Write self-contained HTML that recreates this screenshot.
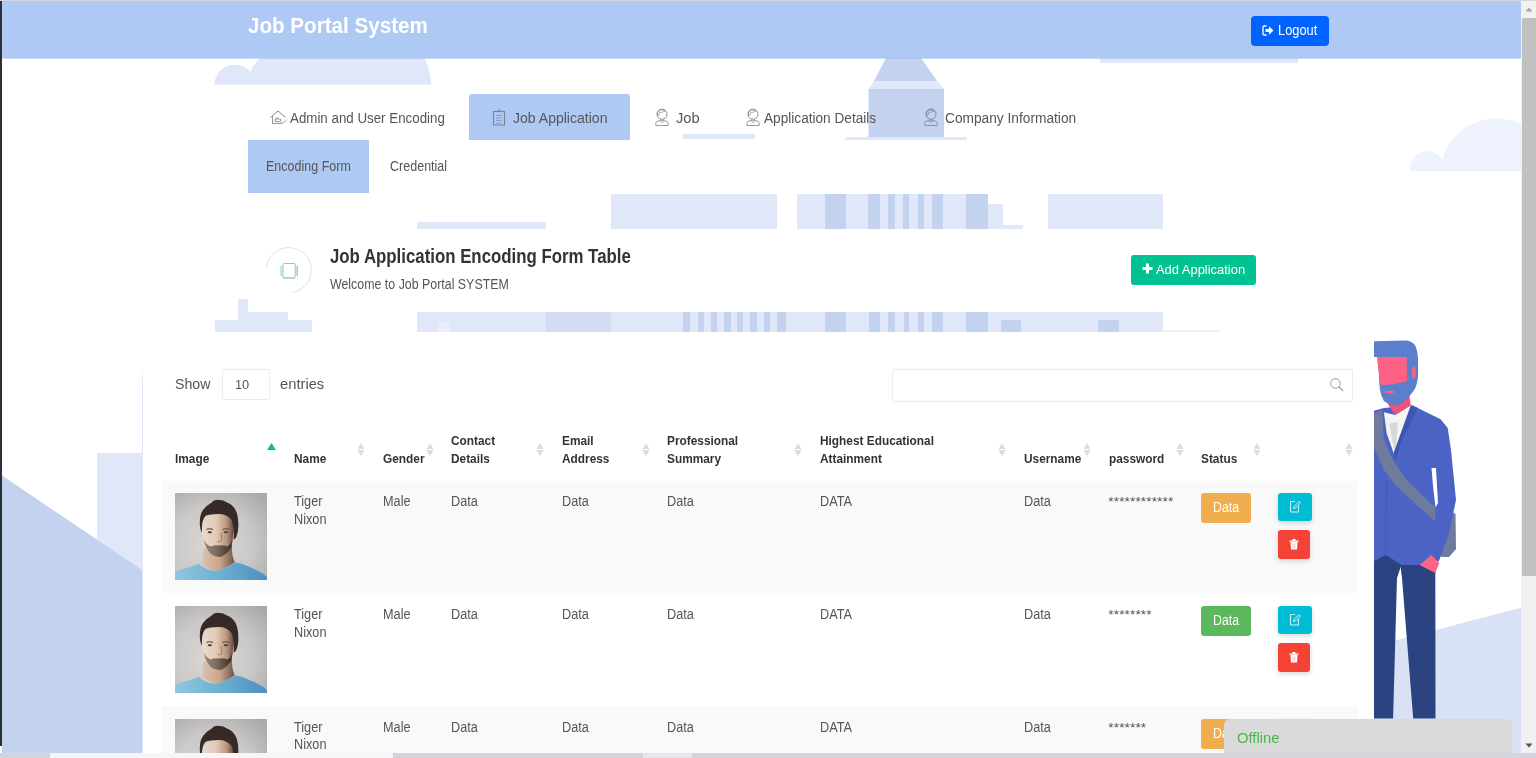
<!DOCTYPE html>
<html><head><meta charset="utf-8">
<style>
*{box-sizing:border-box;margin:0;padding:0}
html,body{width:1536px;height:758px;overflow:hidden;background:#fff}
body{position:relative;font-family:"Liberation Sans",sans-serif;color:#555}
.a{position:absolute}
.lt{background:#dfe7f8}
.dk{background:#c3d2ef}
</style></head><body>
<div class="a" style="left:0;top:0;width:1536px;height:1px;background:#d3d7de"></div>
<div class="a" style="left:0;top:1px;width:2px;height:745px;background:#2b2f36"></div>
<svg class="a" style="left:200px;top:58px" width="240" height="27" viewBox="200 58 240 27">
 <path d="M214.4 84.7 A20.3 20.3 0 0 1 250.3 72 Q254 63 261 57 L423.7 57 Q430 68 431.4 84.7 Z" fill="#dfe7f8"/>
</svg>
<svg class="a" style="left:840px;top:58px" width="130" height="84">
 <polygon points="46,0 81,0 97,23 34,23" fill="#c3d2ef"/>
 <polygon points="34,23 97,23 104,31 29,31" fill="#dfe7f8"/>
 <rect x="28.5" y="31" width="75.5" height="48" fill="#c3d2ef"/>
 <rect x="5.5" y="79" width="121" height="3" fill="#dfe7f8"/>
</svg>
<div class="a lt" style="left:683px;top:134px;width:72px;height:5px"></div>
<div class="a lt" style="left:1100px;top:58px;width:198px;height:5px"></div>
<svg class="a" style="left:1405px;top:116px" width="120" height="60">
 <path d="M5.4 55.3 A17.2 17.2 0 0 1 37 43.4 A57.5 57.5 0 0 1 116 7.8 L116 55.3 Z" fill="#edf2fc"/>
</svg>
<div class="a lt" style="left:417px;top:222px;width:129px;height:7px"></div>
<div class="a lt" style="left:611px;top:194px;width:166px;height:35px"></div>
<div class="a lt" style="left:797px;top:194px;width:191px;height:35px"></div>
<div class="a dk" style="left:825px;top:194px;width:21px;height:35px"></div>
<div class="a dk" style="left:868px;top:194px;width:12px;height:35px"></div>
<div class="a dk" style="left:888px;top:194px;width:7px;height:35px"></div>
<div class="a dk" style="left:903px;top:194px;width:6px;height:35px"></div>
<div class="a dk" style="left:918px;top:194px;width:6px;height:35px"></div>
<div class="a dk" style="left:932px;top:194px;width:11px;height:35px"></div>
<div class="a dk" style="left:966px;top:194px;width:22px;height:35px"></div>
<div class="a lt" style="left:988px;top:204px;width:15px;height:25px"></div>
<div class="a lt" style="left:1003px;top:225px;width:20px;height:4px"></div>
<div class="a lt" style="left:1048px;top:194px;width:115px;height:35px"></div>
<div class="a lt" style="left:215px;top:320px;width:97px;height:12px"></div>
<div class="a lt" style="left:238px;top:312px;width:50px;height:9px"></div>
<div class="a lt" style="left:238px;top:299px;width:10px;height:14px"></div>
<div class="a lt" style="left:417px;top:312px;width:746px;height:20px"></div>
<div class="a " style="left:438px;top:322px;width:12px;height:10px;background:#e9eef9"></div>
<div class="a " style="left:546px;top:312px;width:65px;height:20px;background:#d2ddf3"></div>
<div class="a dk" style="left:683px;top:312px;width:7px;height:20px"></div>
<div class="a dk" style="left:698px;top:312px;width:6px;height:20px"></div>
<div class="a dk" style="left:711px;top:312px;width:6px;height:20px"></div>
<div class="a dk" style="left:724px;top:312px;width:7px;height:20px"></div>
<div class="a dk" style="left:737px;top:312px;width:6px;height:20px"></div>
<div class="a dk" style="left:750px;top:312px;width:7px;height:20px"></div>
<div class="a dk" style="left:764px;top:312px;width:6px;height:20px"></div>
<div class="a dk" style="left:777px;top:312px;width:9px;height:20px"></div>
<div class="a dk" style="left:825px;top:312px;width:21px;height:20px"></div>
<div class="a dk" style="left:869px;top:312px;width:11px;height:20px"></div>
<div class="a dk" style="left:888px;top:312px;width:7px;height:20px"></div>
<div class="a dk" style="left:904px;top:312px;width:5px;height:20px"></div>
<div class="a dk" style="left:918px;top:312px;width:6px;height:20px"></div>
<div class="a dk" style="left:932px;top:312px;width:11px;height:20px"></div>
<div class="a dk" style="left:966px;top:312px;width:22px;height:20px"></div>
<div class="a dk" style="left:1001px;top:320px;width:20px;height:12px"></div>
<div class="a dk" style="left:1098px;top:320px;width:21px;height:12px"></div>
<div class="a " style="left:1163px;top:330px;width:58px;height:2px;background:#eef2fb"></div>
<div class="a lt" style="left:97px;top:453px;width:45px;height:300px"></div>
<svg class="a" style="left:2px;top:470px" width="141" height="283"><polygon points="0,5.5 141,100.8 141,283 0,283" fill="#c3d2ee"/></svg>
<!-- man illustration -->
<svg class="a" style="left:1360px;top:335px" width="162" height="420" viewBox="1360 335 162 420">
 <polygon points="1374,646 1521,607.7 1521,753 1374,753" fill="#d9e2f5"/>
 <polygon points="1374,550 1401,555 1401,566 1397,578 1393.1,718.4 1374,718.4" fill="#2b4380"/>
 <polygon points="1399,555 1435.3,555 1435.5,718.4 1413.2,718.4 1402,578" fill="#2b4380"/>
 <polygon points="1435.3,507.6 1448,509 1455.5,514 1456,549 1449,557 1441,557 1436,540" fill="#6e7b9c"/>
 <polygon points="1374,410.8 1383.9,408 1412.2,405.2 1440.6,419.3 1447.7,427.9 1451,450 1453,470 1456,500 1449,533 1439,561 1423,565 1401.6,565 1385.8,555 1374,561" fill="#4a63c5"/>
 <polygon points="1431.5,468 1436,468 1438,503 1435.5,507.5 1433,486" fill="#fff"/>
 <polygon points="1383.9,412.3 1395.2,415 1410.8,405.2 1412.2,416.5 1393.8,453.4 1386.7,433.5" fill="#f4f4f4"/>
 <polygon points="1389.5,423.6 1398,422.2 1395.5,453.4 1392,440" fill="#d8d8d8"/>
 <polygon points="1410.8,405.2 1418,408 1400.9,442 1395.2,461.9 1394,452" fill="#3b55b0"/>
 <polygon points="1374,413.7 1382.4,409.4 1383.9,439.2 1392,458 1406.6,480 1435.3,507.6 1435.3,521.5 1397,487 1384,470 1376,452 1374,448" fill="#6e7b9c"/>
 <path d="M1387 480 Q1385 520 1386 555" stroke="#4258b8" stroke-width="1" fill="none"/>
 <polygon points="1419.5,565 1431.3,555 1439.3,563 1435.3,573" fill="#ff6384"/>
 <polygon points="1386.7,402.3 1409.4,395.2 1410.8,405.2 1395.2,415" fill="#f0507a"/>
 <path d="M1374 341.3 L1406.6 340.4 Q1413 341.5 1415.5 346 Q1418.5 354 1418 363 L1418 377 Q1417 386 1413.6 391 Q1406 401 1398 405.2 Q1389 405 1383.9 400.9 Q1380.5 395 1379.6 388.1 L1374 357 Z" fill="#5b7fcc"/>
 <polygon points="1374,356.9 1378,356.9 1379.6,388.1 1374,388.1" fill="#fff"/>
 <polygon points="1376.8,356.9 1406.6,356.9 1407.1,381 1395.2,383.9 1381,385.3 1378.2,368.3" fill="#ff6185"/>
 <ellipse cx="1413.8" cy="372.5" rx="1.9" ry="6.5" fill="#ff6185"/>
 <ellipse cx="1389.5" cy="392" rx="5" ry="1.3" fill="#ff6185"/>
</svg>

<div class="a" style="left:2px;top:1px;width:1519px;height:57px;background:#afc9f5;box-shadow:0 0.5px 1px rgba(150,180,235,0.5)"></div>
<div class="a" style="left:247.7px;top:13.00px;font-size:22.5px;font-weight:bold;color:#fff;line-height:normal;white-space:nowrap;transform:scaleX(0.916);transform-origin:0 0">Job Portal System</div>
<div class="a" style="left:1251px;top:16px;width:78px;height:30px;background:#0062ff;border-radius:4px"></div>
<svg class="a" style="left:1262px;top:25px" width="12" height="11" viewBox="0 0 12 11"><path d="M4.5 1H2.2Q1 1 1 2.2V8.8Q1 10 2.2 10H4.5" fill="none" stroke="#fff" stroke-width="1.3"/><path d="M3.5 4H7V1.2L11.5 5.5 7 9.8V7H3.5Z" fill="#fff"/></svg>
<div class="a" style="left:1277.8px;top:23.00px;font-size:13.8px;font-weight:normal;color:#fff;line-height:normal;white-space:nowrap;transform:scaleX(0.931);transform-origin:0 0">Logout</div>
<div class="a" style="left:469px;top:94px;width:161px;height:46px;background:#afc9f5;border-radius:3px 3px 0 0"></div>
<svg class="a" style="left:269px;top:109px" width="19" height="17" viewBox="0 0 19 17">
 <path d="M1.5 8.5 L9 2 L16.5 8.5" fill="none" stroke="#777" stroke-width="0.9"/>
 <path d="M3.5 7 V14.5 H13" fill="none" stroke="#888" stroke-width="0.9"/>
 <path d="M6 10 H11.5 V12.5 H6 Z M7.5 8.5 V10 M9 8.5 V10" fill="none" stroke="#888" stroke-width="0.8"/>
 <path d="M8 14.5 Q15 15 18 10.5" fill="none" stroke="#999" stroke-width="0.9"/>
</svg>
<div class="a" style="left:289.7px;top:110.00px;font-size:14px;font-weight:normal;color:#555;line-height:normal;white-space:nowrap;transform:scaleX(0.952);transform-origin:0 0">Admin and User Encoding</div>
<svg class="a" style="left:492px;top:108px" width="14" height="18" viewBox="0 0 14 18">
 <rect x="1.5" y="3.5" width="11" height="13.5" fill="none" stroke="#7a8294" stroke-width="1.1"/>
 <path d="M5 3.5 L7 1.5 L9 3.5" fill="none" stroke="#7a8294" stroke-width="1"/>
 <path d="M4 7.5H10M4 10H10M4 12.5H10M4 15H9" stroke="#8a93a5" stroke-width="0.8"/>
</svg>
<div class="a" style="left:512.7px;top:110.00px;font-size:14px;font-weight:normal;color:#555;line-height:normal;white-space:nowrap;transform:scaleX(1.003);transform-origin:0 0">Job Application</div>
<svg class="a" style="left:654px;top:107px" width="16" height="20" viewBox="0 0 16 20">
 <ellipse cx="8" cy="7.2" rx="5" ry="5.1" fill="none" stroke="#6d7280" stroke-width="0.8"/>
 <path d="M3.3 8 Q3 4 6 3 Q9 2.3 11 4 Q9 5.5 6 5.3 Q5 7 4.5 9" fill="none" stroke="#7a8090" stroke-width="0.7"/>
 <path d="M6.5 12.2 V13.8 M9.5 12.2 V13.8" stroke="#8a8f9a" stroke-width="0.7"/>
 <path d="M1.8 18.5 V16 Q2 14 5 13.8 H11 Q14 14 14.2 16 V18.5 Z" fill="none" stroke="#7d828e" stroke-width="0.8"/>
 <path d="M6.5 14.5 L8 16 L9.5 14.5" fill="none" stroke="#999" stroke-width="0.6"/>
</svg>
<div class="a" style="left:675.7px;top:110.00px;font-size:14px;font-weight:normal;color:#555;line-height:normal;white-space:nowrap;transform:scaleX(1.045);transform-origin:0 0">Job</div>
<svg class="a" style="left:745px;top:107px" width="16" height="20" viewBox="0 0 16 20">
 <ellipse cx="8" cy="7.2" rx="5" ry="5.1" fill="none" stroke="#6d7280" stroke-width="0.8"/>
 <path d="M3.3 8 Q3 4 6 3 Q9 2.3 11 4 Q9 5.5 6 5.3 Q5 7 4.5 9" fill="none" stroke="#7a8090" stroke-width="0.7"/>
 <path d="M6.5 12.2 V13.8 M9.5 12.2 V13.8" stroke="#8a8f9a" stroke-width="0.7"/>
 <path d="M1.8 18.5 V16 Q2 14 5 13.8 H11 Q14 14 14.2 16 V18.5 Z" fill="none" stroke="#7d828e" stroke-width="0.8"/>
 <path d="M6.5 14.5 L8 16 L9.5 14.5" fill="none" stroke="#999" stroke-width="0.6"/>
</svg>
<div class="a" style="left:764.4px;top:110.00px;font-size:14px;font-weight:normal;color:#555;line-height:normal;white-space:nowrap;transform:scaleX(0.974);transform-origin:0 0">Application Details</div>
<svg class="a" style="left:923px;top:107px" width="16" height="20" viewBox="0 0 16 20">
 <ellipse cx="8" cy="7.2" rx="5" ry="5.1" fill="none" stroke="#6d7280" stroke-width="0.8"/>
 <path d="M3.3 8 Q3 4 6 3 Q9 2.3 11 4 Q9 5.5 6 5.3 Q5 7 4.5 9" fill="none" stroke="#7a8090" stroke-width="0.7"/>
 <path d="M6.5 12.2 V13.8 M9.5 12.2 V13.8" stroke="#8a8f9a" stroke-width="0.7"/>
 <path d="M1.8 18.5 V16 Q2 14 5 13.8 H11 Q14 14 14.2 16 V18.5 Z" fill="none" stroke="#7d828e" stroke-width="0.8"/>
 <path d="M6.5 14.5 L8 16 L9.5 14.5" fill="none" stroke="#999" stroke-width="0.6"/>
</svg>
<div class="a" style="left:945.4px;top:110.00px;font-size:14px;font-weight:normal;color:#555;line-height:normal;white-space:nowrap;transform:scaleX(0.980);transform-origin:0 0">Company Information</div>
<div class="a" style="left:248px;top:140px;width:121px;height:53px;background:#afc9f5"></div>
<div class="a" style="left:266.0px;top:158.00px;font-size:14px;font-weight:normal;color:#555;line-height:normal;white-space:nowrap;transform:scaleX(0.894);transform-origin:0 0">Encoding Form</div>
<div class="a" style="left:390.2px;top:158.00px;font-size:14px;font-weight:normal;color:#555;line-height:normal;white-space:nowrap;transform:scaleX(0.895);transform-origin:0 0">Credential</div>
<svg class="a" style="left:260px;top:242px" width="58" height="58" viewBox="260 242 58 58">
 <path d="M266.4 267.4 A22.5 22.5 0 1 1 293 292.2" fill="none" stroke="#e2e2e2" stroke-width="1"/>
 <rect x="283" y="263.5" width="12.2" height="14.6" rx="1.2" fill="none" stroke="#70c9a8" stroke-width="0.9"/>
 <path d="M283 277.8 H295" stroke="#b9c3cc" stroke-width="0.9"/>
 <path d="M281.1 266 V276" stroke="#7ccfe0" stroke-width="1"/>
 <path d="M297.2 266 V276" stroke="#9fc0cc" stroke-width="1.4"/>
</svg>
<div class="a" style="left:330.2px;top:246.00px;font-size:19.3px;font-weight:bold;color:#333;line-height:normal;white-space:nowrap;transform:scaleX(0.872);transform-origin:0 0">Job Application Encoding Form Table</div>
<div class="a" style="left:330.2px;top:276.00px;font-size:14px;font-weight:normal;color:#555;line-height:normal;white-space:nowrap;transform:scaleX(0.885);transform-origin:0 0">Welcome to Job Portal SYSTEM</div>
<div class="a" style="left:1131px;top:255px;width:125px;height:30px;background:#00c292;border-radius:3px"></div>
<svg class="a" style="left:1142px;top:263.3px" width="11" height="11" viewBox="0 0 11 11"><path d="M4 0.5H7V4H10.5V7H7V10.5H4V7H0.5V4H4Z" fill="#fff"/></svg>
<div class="a" style="left:1155.7px;top:262.00px;font-size:13px;font-weight:normal;color:#fff;line-height:normal;white-space:nowrap;transform:scaleX(0.994);transform-origin:0 0">Add Application</div>
<div class="a" style="left:143px;top:336px;width:1231px;height:417px;background:#fff"></div>
<div class="a" style="left:142px;top:368px;width:1px;height:385px;background:linear-gradient(#fff,#dfe7f8 14px)"></div>
<div class="a" style="left:174.7px;top:375.00px;font-size:15px;font-weight:normal;color:#555;line-height:normal;white-space:nowrap;transform:scaleX(0.943);transform-origin:0 0">Show</div>
<div class="a" style="left:222px;top:369px;width:48px;height:31px;border:1px solid #ececec;border-radius:2px"></div>
<div class="a" style="left:235.4px;top:378.00px;font-size:12.5px;font-weight:normal;color:#555;line-height:normal;white-space:nowrap;transform:scaleX(1.021);transform-origin:0 0">10</div>
<div class="a" style="left:280.4px;top:375.00px;font-size:15px;font-weight:normal;color:#555;line-height:normal;white-space:nowrap;transform:scaleX(0.982);transform-origin:0 0">entries</div>
<div class="a" style="left:892px;top:369px;width:461px;height:33px;border:1px solid #ececec;border-radius:2px"></div>
<svg class="a" style="left:1329px;top:377px" width="16" height="16" viewBox="0 0 16 16"><circle cx="6.5" cy="6.5" r="4.8" fill="none" stroke="#999" stroke-width="1"/><path d="M10 10 L14 14" stroke="#999" stroke-width="1.1"/></svg>
<div class="a" style="left:174.5px;top:449.50px;font-size:13.5px;font-weight:bold;color:#333;line-height:17.5px;white-space:nowrap;transform:scaleX(0.878);transform-origin:0 0">Image</div>
<svg class="a" style="left:267px;top:442.5px" width="9" height="7" viewBox="0 0 9 7"><polygon points="4.5,0 9,7 0,7" fill="#00c292"/></svg>
<div class="a" style="left:293.5px;top:449.50px;font-size:13.5px;font-weight:bold;color:#333;line-height:17.5px;white-space:nowrap;transform:scaleX(0.878);transform-origin:0 0">Name</div>
<svg class="a" style="left:356.5px;top:443px" width="8" height="14" viewBox="0 0 8 14"><polygon points="4,0 7.5,6 0.5,6" fill="#dcdcdc"/><polygon points="0.5,7 7.5,7 4,13.2" fill="#dcdcdc"/></svg>
<div class="a" style="left:382.5px;top:449.50px;font-size:13.5px;font-weight:bold;color:#333;line-height:17.5px;white-space:nowrap;transform:scaleX(0.878);transform-origin:0 0">Gender</div>
<svg class="a" style="left:425.5px;top:443px" width="8" height="14" viewBox="0 0 8 14"><polygon points="4,0 7.5,6 0.5,6" fill="#dcdcdc"/><polygon points="0.5,7 7.5,7 4,13.2" fill="#dcdcdc"/></svg>
<div class="a" style="left:450.5px;top:432.00px;font-size:13.5px;font-weight:bold;color:#333;line-height:17.5px;white-space:nowrap;transform:scaleX(0.878);transform-origin:0 0">Contact<br>Details</div>
<svg class="a" style="left:535.5px;top:443px" width="8" height="14" viewBox="0 0 8 14"><polygon points="4,0 7.5,6 0.5,6" fill="#dcdcdc"/><polygon points="0.5,7 7.5,7 4,13.2" fill="#dcdcdc"/></svg>
<div class="a" style="left:561.5px;top:432.00px;font-size:13.5px;font-weight:bold;color:#333;line-height:17.5px;white-space:nowrap;transform:scaleX(0.878);transform-origin:0 0">Email<br>Address</div>
<svg class="a" style="left:641.5px;top:443px" width="8" height="14" viewBox="0 0 8 14"><polygon points="4,0 7.5,6 0.5,6" fill="#dcdcdc"/><polygon points="0.5,7 7.5,7 4,13.2" fill="#dcdcdc"/></svg>
<div class="a" style="left:666.5px;top:432.00px;font-size:13.5px;font-weight:bold;color:#333;line-height:17.5px;white-space:nowrap;transform:scaleX(0.878);transform-origin:0 0">Professional<br>Summary</div>
<svg class="a" style="left:793.5px;top:443px" width="8" height="14" viewBox="0 0 8 14"><polygon points="4,0 7.5,6 0.5,6" fill="#dcdcdc"/><polygon points="0.5,7 7.5,7 4,13.2" fill="#dcdcdc"/></svg>
<div class="a" style="left:819.5px;top:432.00px;font-size:13.5px;font-weight:bold;color:#333;line-height:17.5px;white-space:nowrap;transform:scaleX(0.878);transform-origin:0 0">Highest Educational<br>Attainment</div>
<svg class="a" style="left:997.5px;top:443px" width="8" height="14" viewBox="0 0 8 14"><polygon points="4,0 7.5,6 0.5,6" fill="#dcdcdc"/><polygon points="0.5,7 7.5,7 4,13.2" fill="#dcdcdc"/></svg>
<div class="a" style="left:1023.5px;top:449.50px;font-size:13.5px;font-weight:bold;color:#333;line-height:17.5px;white-space:nowrap;transform:scaleX(0.878);transform-origin:0 0">Username</div>
<svg class="a" style="left:1082.5px;top:443px" width="8" height="14" viewBox="0 0 8 14"><polygon points="4,0 7.5,6 0.5,6" fill="#dcdcdc"/><polygon points="0.5,7 7.5,7 4,13.2" fill="#dcdcdc"/></svg>
<div class="a" style="left:1108.5px;top:449.50px;font-size:13.5px;font-weight:bold;color:#333;line-height:17.5px;white-space:nowrap;transform:scaleX(0.878);transform-origin:0 0">password</div>
<svg class="a" style="left:1175.5px;top:443px" width="8" height="14" viewBox="0 0 8 14"><polygon points="4,0 7.5,6 0.5,6" fill="#dcdcdc"/><polygon points="0.5,7 7.5,7 4,13.2" fill="#dcdcdc"/></svg>
<div class="a" style="left:1200.5px;top:449.50px;font-size:13.5px;font-weight:bold;color:#333;line-height:17.5px;white-space:nowrap;transform:scaleX(0.878);transform-origin:0 0">Status</div>
<svg class="a" style="left:1252.5px;top:443px" width="8" height="14" viewBox="0 0 8 14"><polygon points="4,0 7.5,6 0.5,6" fill="#dcdcdc"/><polygon points="0.5,7 7.5,7 4,13.2" fill="#dcdcdc"/></svg>
<svg class="a" style="left:1344.5px;top:443px" width="8" height="14" viewBox="0 0 8 14"><polygon points="4,0 7.5,6 0.5,6" fill="#dcdcdc"/><polygon points="0.5,7 7.5,7 4,13.2" fill="#dcdcdc"/></svg>
<div class="a" style="left:162px;top:480.6px;width:1195px;height:112.6px;background:#f9f9f9"></div>
<div class="a" style="left:175px;top:493.4px;width:92px;height:87px;overflow:hidden"><svg width="92" height="87" viewBox="0 0 92 87"><defs><radialGradient id="pg" cx="0.4" cy="0.6" r="0.8"><stop offset="0" stop-color="#d9d8d6"/><stop offset="0.55" stop-color="#cac9c7"/><stop offset="1" stop-color="#a9a8a6"/></radialGradient><linearGradient id="sk" x1="0" x2="1"><stop offset="0" stop-color="#e9d9cc"/><stop offset="0.45" stop-color="#e2ccb9"/><stop offset="0.78" stop-color="#b8957d"/><stop offset="1" stop-color="#5e463a"/></linearGradient><linearGradient id="nk" x1="0" x2="1"><stop offset="0" stop-color="#dcc2ae"/><stop offset="0.55" stop-color="#c9a68c"/><stop offset="1" stop-color="#6e5244"/></linearGradient><linearGradient id="sh" x1="0" x2="1"><stop offset="0" stop-color="#8fc8de"/><stop offset="0.45" stop-color="#6fb2d3"/><stop offset="1" stop-color="#4f8fbf"/></linearGradient><linearGradient id="bd" x1="0" x2="1"><stop offset="0" stop-color="#5a473c" stop-opacity="0.55"/><stop offset="0.5" stop-color="#4d3c33" stop-opacity="0.7"/><stop offset="1" stop-color="#2f241f" stop-opacity="0.9"/></linearGradient><filter id="bl" x="-5%" y="-5%" width="110%" height="110%"><feGaussianBlur stdDeviation="0.5"/></filter></defs>
<rect width="92" height="87" fill="url(#pg)"/>
<g filter="url(#bl)">
<path d="M28 56 Q28.5 66 27 71 Q35 77 41 78 Q52 75 59.7 69 Q56.5 63 57 52 Z" fill="url(#nk)"/>
<path d="M26.5 30 Q31 22.5 40 20.8 Q51 20.5 57 25.7 Q60 33 58.2 42 Q57.5 50 55.3 56.2 Q50 62.5 42.2 63.8 Q34 61 29.2 51.8 Q26.5 42 26.5 30Z" fill="url(#sk)"/>
<path d="M28.5 46 Q30.5 56 36 61 Q41 64.5 45 64 Q52 61.5 56 55 L58.5 43 Q57 51 52.5 53.5 Q48.5 51.5 44 52.5 Q39.5 51.5 36 53.5 Q31 52 28.5 46Z" fill="url(#bd)"/>
<path d="M24.8 31.5 Q24.5 22 28 17 Q32 12 36 10 Q40 5.5 44 7 Q48 6.5 51 9 Q57 11 60 16 Q63 21 63.3 30 Q63.8 38 61.1 44.6 L58.5 47 Q59.5 36 57 27.5 Q52 21 45 21 Q35 20.8 30.6 22.8 Q27.5 26 27 33 L26.8 40 Q25 36 24.8 31.5Z" fill="#352a25"/>
<path d="M31.5 36.5 Q34.5 35 38 36.5 M47.5 36.5 Q51 35 54.5 36.5" stroke="#5a463b" stroke-width="1.1" fill="none"/>
<ellipse cx="34.8" cy="39.3" rx="2.2" ry="1" fill="#4a3a33"/>
<ellipse cx="50.8" cy="39.3" rx="2.2" ry="1" fill="#4a3a33"/>
<path d="M46 40 Q47 45 46.5 48 Q45 49.5 42.5 48.5" stroke="#9b7a66" stroke-width="0.9" fill="none"/>
<path d="M0 79.2 Q7 76 13.8 74.6 Q19 73 23.4 70.7 Q31 77 40.8 77.9 Q52 75 59.7 69.2 Q67 70 73.4 73.4 Q81 76.5 87.2 80.3 L92 84 V87 H0Z" fill="url(#sh)"/>
</g>
</svg>
</div>
<div class="a" style="left:293.5px;top:492.80px;font-size:14px;color:#555;line-height:17.7px;white-space:nowrap;transform:scaleX(0.907);transform-origin:0 0">Tiger<br>Nixon</div>
<div class="a" style="left:382.5px;top:492.80px;font-size:14px;color:#555;line-height:17.7px;white-space:nowrap;transform:scaleX(0.907);transform-origin:0 0">Male</div>
<div class="a" style="left:450.5px;top:492.80px;font-size:14px;color:#555;line-height:17.7px;white-space:nowrap;transform:scaleX(0.907);transform-origin:0 0">Data</div>
<div class="a" style="left:561.5px;top:492.80px;font-size:14px;color:#555;line-height:17.7px;white-space:nowrap;transform:scaleX(0.907);transform-origin:0 0">Data</div>
<div class="a" style="left:666.5px;top:492.80px;font-size:14px;color:#555;line-height:17.7px;white-space:nowrap;transform:scaleX(0.907);transform-origin:0 0">Data</div>
<div class="a" style="left:819.5px;top:492.80px;font-size:14px;color:#555;line-height:17.7px;white-space:nowrap;transform:scaleX(0.907);transform-origin:0 0">DATA</div>
<div class="a" style="left:1023.5px;top:492.80px;font-size:14px;color:#555;line-height:17.7px;white-space:nowrap;transform:scaleX(0.907);transform-origin:0 0">Data</div>
<div class="a" style="left:1108.3px;top:492.80px;font-size:13.5px;color:#555;line-height:17.7px;white-space:nowrap;letter-spacing:0.17px">************</div>
<div class="a" style="left:1201px;top:493px;width:50px;height:30px;background:#f0ad4e;border-radius:3px"></div>
<div class="a" style="left:1212.9px;top:498.70px;font-size:14px;color:#fff;line-height:normal;white-space:nowrap;transform:scaleX(0.879);transform-origin:0 0">Data</div>
<div class="a" style="left:1278px;top:493px;width:34px;height:28px;background:#00bcd4;border-radius:3px;box-shadow:0 2px 5px rgba(0,0,0,0.16)"><svg class="a" style="left:11px;top:7px" width="12" height="13" viewBox="0 0 12 13"><path d="M6 1.5H1.5V12H9.5V6" fill="none" stroke="#e8fbfd" stroke-width="0.9"/><path d="M4.5 8.5L5 6.5L10 1.5L11.5 3L6.5 8Z" fill="none" stroke="#e8fbfd" stroke-width="0.9"/></svg></div>
<div class="a" style="left:1278px;top:530px;width:32px;height:29px;background:#f44336;border-radius:3px;box-shadow:0 2px 5px rgba(0,0,0,0.16)"><svg class="a" style="left:11px;top:8px" width="10" height="12" viewBox="0 0 10 12"><path d="M0.5 2.5H9.5V3.8H0.5Z M3.5 2.5V1H6.5V2.5" fill="#fff"/><path d="M1.5 4H8.5L8 11.5H2Z" fill="#fff"/><path d="M4 5.5V10M6 5.5V10" stroke="#f7a9a3" stroke-width="0.7"/></svg></div>
<div class="a" style="left:162px;top:593.2px;width:1195px;height:112.8px;background:#fff"></div>
<div class="a" style="left:175px;top:606.4px;width:92px;height:87px;overflow:hidden"><svg width="92" height="87" viewBox="0 0 92 87"><defs><radialGradient id="pg" cx="0.4" cy="0.6" r="0.8"><stop offset="0" stop-color="#d9d8d6"/><stop offset="0.55" stop-color="#cac9c7"/><stop offset="1" stop-color="#a9a8a6"/></radialGradient><linearGradient id="sk" x1="0" x2="1"><stop offset="0" stop-color="#e9d9cc"/><stop offset="0.45" stop-color="#e2ccb9"/><stop offset="0.78" stop-color="#b8957d"/><stop offset="1" stop-color="#5e463a"/></linearGradient><linearGradient id="nk" x1="0" x2="1"><stop offset="0" stop-color="#dcc2ae"/><stop offset="0.55" stop-color="#c9a68c"/><stop offset="1" stop-color="#6e5244"/></linearGradient><linearGradient id="sh" x1="0" x2="1"><stop offset="0" stop-color="#8fc8de"/><stop offset="0.45" stop-color="#6fb2d3"/><stop offset="1" stop-color="#4f8fbf"/></linearGradient><linearGradient id="bd" x1="0" x2="1"><stop offset="0" stop-color="#5a473c" stop-opacity="0.55"/><stop offset="0.5" stop-color="#4d3c33" stop-opacity="0.7"/><stop offset="1" stop-color="#2f241f" stop-opacity="0.9"/></linearGradient><filter id="bl" x="-5%" y="-5%" width="110%" height="110%"><feGaussianBlur stdDeviation="0.5"/></filter></defs>
<rect width="92" height="87" fill="url(#pg)"/>
<g filter="url(#bl)">
<path d="M28 56 Q28.5 66 27 71 Q35 77 41 78 Q52 75 59.7 69 Q56.5 63 57 52 Z" fill="url(#nk)"/>
<path d="M26.5 30 Q31 22.5 40 20.8 Q51 20.5 57 25.7 Q60 33 58.2 42 Q57.5 50 55.3 56.2 Q50 62.5 42.2 63.8 Q34 61 29.2 51.8 Q26.5 42 26.5 30Z" fill="url(#sk)"/>
<path d="M28.5 46 Q30.5 56 36 61 Q41 64.5 45 64 Q52 61.5 56 55 L58.5 43 Q57 51 52.5 53.5 Q48.5 51.5 44 52.5 Q39.5 51.5 36 53.5 Q31 52 28.5 46Z" fill="url(#bd)"/>
<path d="M24.8 31.5 Q24.5 22 28 17 Q32 12 36 10 Q40 5.5 44 7 Q48 6.5 51 9 Q57 11 60 16 Q63 21 63.3 30 Q63.8 38 61.1 44.6 L58.5 47 Q59.5 36 57 27.5 Q52 21 45 21 Q35 20.8 30.6 22.8 Q27.5 26 27 33 L26.8 40 Q25 36 24.8 31.5Z" fill="#352a25"/>
<path d="M31.5 36.5 Q34.5 35 38 36.5 M47.5 36.5 Q51 35 54.5 36.5" stroke="#5a463b" stroke-width="1.1" fill="none"/>
<ellipse cx="34.8" cy="39.3" rx="2.2" ry="1" fill="#4a3a33"/>
<ellipse cx="50.8" cy="39.3" rx="2.2" ry="1" fill="#4a3a33"/>
<path d="M46 40 Q47 45 46.5 48 Q45 49.5 42.5 48.5" stroke="#9b7a66" stroke-width="0.9" fill="none"/>
<path d="M0 79.2 Q7 76 13.8 74.6 Q19 73 23.4 70.7 Q31 77 40.8 77.9 Q52 75 59.7 69.2 Q67 70 73.4 73.4 Q81 76.5 87.2 80.3 L92 84 V87 H0Z" fill="url(#sh)"/>
</g>
</svg>
</div>
<div class="a" style="left:293.5px;top:605.90px;font-size:14px;color:#555;line-height:17.7px;white-space:nowrap;transform:scaleX(0.907);transform-origin:0 0">Tiger<br>Nixon</div>
<div class="a" style="left:382.5px;top:605.90px;font-size:14px;color:#555;line-height:17.7px;white-space:nowrap;transform:scaleX(0.907);transform-origin:0 0">Male</div>
<div class="a" style="left:450.5px;top:605.90px;font-size:14px;color:#555;line-height:17.7px;white-space:nowrap;transform:scaleX(0.907);transform-origin:0 0">Data</div>
<div class="a" style="left:561.5px;top:605.90px;font-size:14px;color:#555;line-height:17.7px;white-space:nowrap;transform:scaleX(0.907);transform-origin:0 0">Data</div>
<div class="a" style="left:666.5px;top:605.90px;font-size:14px;color:#555;line-height:17.7px;white-space:nowrap;transform:scaleX(0.907);transform-origin:0 0">Data</div>
<div class="a" style="left:819.5px;top:605.90px;font-size:14px;color:#555;line-height:17.7px;white-space:nowrap;transform:scaleX(0.907);transform-origin:0 0">DATA</div>
<div class="a" style="left:1023.5px;top:605.90px;font-size:14px;color:#555;line-height:17.7px;white-space:nowrap;transform:scaleX(0.907);transform-origin:0 0">Data</div>
<div class="a" style="left:1108.3px;top:605.90px;font-size:13.5px;color:#555;line-height:17.7px;white-space:nowrap;letter-spacing:0.17px">********</div>
<div class="a" style="left:1201px;top:606px;width:50px;height:30px;background:#5cb85c;border-radius:3px"></div>
<div class="a" style="left:1212.9px;top:611.70px;font-size:14px;color:#fff;line-height:normal;white-space:nowrap;transform:scaleX(0.879);transform-origin:0 0">Data</div>
<div class="a" style="left:1278px;top:606px;width:34px;height:28px;background:#00bcd4;border-radius:3px;box-shadow:0 2px 5px rgba(0,0,0,0.16)"><svg class="a" style="left:11px;top:7px" width="12" height="13" viewBox="0 0 12 13"><path d="M6 1.5H1.5V12H9.5V6" fill="none" stroke="#e8fbfd" stroke-width="0.9"/><path d="M4.5 8.5L5 6.5L10 1.5L11.5 3L6.5 8Z" fill="none" stroke="#e8fbfd" stroke-width="0.9"/></svg></div>
<div class="a" style="left:1278px;top:643px;width:32px;height:29px;background:#f44336;border-radius:3px;box-shadow:0 2px 5px rgba(0,0,0,0.16)"><svg class="a" style="left:11px;top:8px" width="10" height="12" viewBox="0 0 10 12"><path d="M0.5 2.5H9.5V3.8H0.5Z M3.5 2.5V1H6.5V2.5" fill="#fff"/><path d="M1.5 4H8.5L8 11.5H2Z" fill="#fff"/><path d="M4 5.5V10M6 5.5V10" stroke="#f7a9a3" stroke-width="0.7"/></svg></div>
<div class="a" style="left:162px;top:706px;width:1195px;height:112.0px;background:#f9f9f9"></div>
<div class="a" style="left:175px;top:719.4px;width:92px;height:87px;overflow:hidden"><svg width="92" height="87" viewBox="0 0 92 87"><defs><radialGradient id="pg" cx="0.4" cy="0.6" r="0.8"><stop offset="0" stop-color="#d9d8d6"/><stop offset="0.55" stop-color="#cac9c7"/><stop offset="1" stop-color="#a9a8a6"/></radialGradient><linearGradient id="sk" x1="0" x2="1"><stop offset="0" stop-color="#e9d9cc"/><stop offset="0.45" stop-color="#e2ccb9"/><stop offset="0.78" stop-color="#b8957d"/><stop offset="1" stop-color="#5e463a"/></linearGradient><linearGradient id="nk" x1="0" x2="1"><stop offset="0" stop-color="#dcc2ae"/><stop offset="0.55" stop-color="#c9a68c"/><stop offset="1" stop-color="#6e5244"/></linearGradient><linearGradient id="sh" x1="0" x2="1"><stop offset="0" stop-color="#8fc8de"/><stop offset="0.45" stop-color="#6fb2d3"/><stop offset="1" stop-color="#4f8fbf"/></linearGradient><linearGradient id="bd" x1="0" x2="1"><stop offset="0" stop-color="#5a473c" stop-opacity="0.55"/><stop offset="0.5" stop-color="#4d3c33" stop-opacity="0.7"/><stop offset="1" stop-color="#2f241f" stop-opacity="0.9"/></linearGradient><filter id="bl" x="-5%" y="-5%" width="110%" height="110%"><feGaussianBlur stdDeviation="0.5"/></filter></defs>
<rect width="92" height="87" fill="url(#pg)"/>
<g filter="url(#bl)">
<path d="M28 56 Q28.5 66 27 71 Q35 77 41 78 Q52 75 59.7 69 Q56.5 63 57 52 Z" fill="url(#nk)"/>
<path d="M26.5 30 Q31 22.5 40 20.8 Q51 20.5 57 25.7 Q60 33 58.2 42 Q57.5 50 55.3 56.2 Q50 62.5 42.2 63.8 Q34 61 29.2 51.8 Q26.5 42 26.5 30Z" fill="url(#sk)"/>
<path d="M28.5 46 Q30.5 56 36 61 Q41 64.5 45 64 Q52 61.5 56 55 L58.5 43 Q57 51 52.5 53.5 Q48.5 51.5 44 52.5 Q39.5 51.5 36 53.5 Q31 52 28.5 46Z" fill="url(#bd)"/>
<path d="M24.8 31.5 Q24.5 22 28 17 Q32 12 36 10 Q40 5.5 44 7 Q48 6.5 51 9 Q57 11 60 16 Q63 21 63.3 30 Q63.8 38 61.1 44.6 L58.5 47 Q59.5 36 57 27.5 Q52 21 45 21 Q35 20.8 30.6 22.8 Q27.5 26 27 33 L26.8 40 Q25 36 24.8 31.5Z" fill="#352a25"/>
<path d="M31.5 36.5 Q34.5 35 38 36.5 M47.5 36.5 Q51 35 54.5 36.5" stroke="#5a463b" stroke-width="1.1" fill="none"/>
<ellipse cx="34.8" cy="39.3" rx="2.2" ry="1" fill="#4a3a33"/>
<ellipse cx="50.8" cy="39.3" rx="2.2" ry="1" fill="#4a3a33"/>
<path d="M46 40 Q47 45 46.5 48 Q45 49.5 42.5 48.5" stroke="#9b7a66" stroke-width="0.9" fill="none"/>
<path d="M0 79.2 Q7 76 13.8 74.6 Q19 73 23.4 70.7 Q31 77 40.8 77.9 Q52 75 59.7 69.2 Q67 70 73.4 73.4 Q81 76.5 87.2 80.3 L92 84 V87 H0Z" fill="url(#sh)"/>
</g>
</svg>
</div>
<div class="a" style="left:293.5px;top:718.70px;font-size:14px;color:#555;line-height:17.7px;white-space:nowrap;transform:scaleX(0.907);transform-origin:0 0">Tiger<br>Nixon</div>
<div class="a" style="left:382.5px;top:718.70px;font-size:14px;color:#555;line-height:17.7px;white-space:nowrap;transform:scaleX(0.907);transform-origin:0 0">Male</div>
<div class="a" style="left:450.5px;top:718.70px;font-size:14px;color:#555;line-height:17.7px;white-space:nowrap;transform:scaleX(0.907);transform-origin:0 0">Data</div>
<div class="a" style="left:561.5px;top:718.70px;font-size:14px;color:#555;line-height:17.7px;white-space:nowrap;transform:scaleX(0.907);transform-origin:0 0">Data</div>
<div class="a" style="left:666.5px;top:718.70px;font-size:14px;color:#555;line-height:17.7px;white-space:nowrap;transform:scaleX(0.907);transform-origin:0 0">Data</div>
<div class="a" style="left:819.5px;top:718.70px;font-size:14px;color:#555;line-height:17.7px;white-space:nowrap;transform:scaleX(0.907);transform-origin:0 0">DATA</div>
<div class="a" style="left:1023.5px;top:718.70px;font-size:14px;color:#555;line-height:17.7px;white-space:nowrap;transform:scaleX(0.907);transform-origin:0 0">Data</div>
<div class="a" style="left:1108.3px;top:718.70px;font-size:13.5px;color:#555;line-height:17.7px;white-space:nowrap;letter-spacing:0.17px">*******</div>
<div class="a" style="left:1201px;top:719px;width:50px;height:30px;background:#f0ad4e;border-radius:3px"></div>
<div class="a" style="left:1212.9px;top:724.70px;font-size:14px;color:#fff;line-height:normal;white-space:nowrap;transform:scaleX(0.879);transform-origin:0 0">Data</div>
<div class="a" style="left:1278px;top:719px;width:34px;height:28px;background:#00bcd4;border-radius:3px;box-shadow:0 2px 5px rgba(0,0,0,0.16)"><svg class="a" style="left:11px;top:7px" width="12" height="13" viewBox="0 0 12 13"><path d="M6 1.5H1.5V12H9.5V6" fill="none" stroke="#e8fbfd" stroke-width="0.9"/><path d="M4.5 8.5L5 6.5L10 1.5L11.5 3L6.5 8Z" fill="none" stroke="#e8fbfd" stroke-width="0.9"/></svg></div>
<div class="a" style="left:1278px;top:756px;width:32px;height:29px;background:#f44336;border-radius:3px;box-shadow:0 2px 5px rgba(0,0,0,0.16)"><svg class="a" style="left:11px;top:8px" width="10" height="12" viewBox="0 0 10 12"><path d="M0.5 2.5H9.5V3.8H0.5Z M3.5 2.5V1H6.5V2.5" fill="#fff"/><path d="M1.5 4H8.5L8 11.5H2Z" fill="#fff"/><path d="M4 5.5V10M6 5.5V10" stroke="#f7a9a3" stroke-width="0.7"/></svg></div>
<div class="a" style="left:1224px;top:719px;width:288px;height:34px;background:#dadada;border-radius:6px 6px 0 0"></div>
<div class="a" style="left:1237.1px;top:729.00px;font-size:15px;font-weight:normal;color:#4cb54a;line-height:normal;white-space:nowrap;transform:scaleX(0.986);transform-origin:0 0">Offline</div>
<div class="a" style="left:1521px;top:1px;width:15px;height:752px;background:#f1f1f1"></div>
<div class="a" style="left:1522px;top:18px;width:14px;height:558px;background:#c1c1c1"></div>
<svg class="a" style="left:1525px;top:7px" width="8" height="5" viewBox="0 0 8 5"><polygon points="4,0.5 7.5,4.5 0.5,4.5" fill="#a3a3a3"/></svg>
<svg class="a" style="left:1525px;top:743px" width="8" height="5" viewBox="0 0 8 5"><polygon points="0.5,0.5 7.5,0.5 4,4.5" fill="#505050"/></svg>
<div class="a" style="left:0;top:753px;width:1536px;height:5px;background:#d4d4dc"></div>
<div class="a" style="left:50px;top:753px;width:343px;height:5px;background:#f6f6f8"></div>
<div class="a" style="left:643px;top:753px;width:49px;height:5px;background:#e6e6ec"></div>
</body></html>
